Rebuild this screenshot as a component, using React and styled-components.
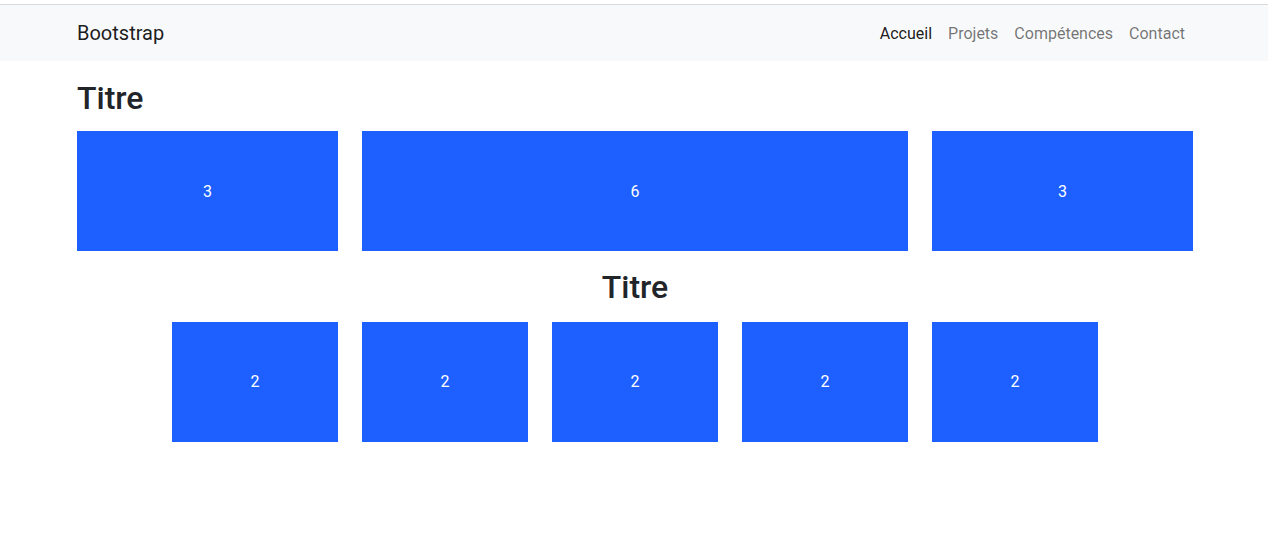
import styled, { createGlobalStyle } from 'styled-components';

const GlobalStyle = createGlobalStyle`
  body {
    margin: 0;
    font-family: Roboto, "Liberation Sans", "Noto Sans", sans-serif;
    color: #212529;
    background: #fff;
  }
`;

const Page = styled.div`
  padding-top: 4px;
`;

const Navbar = styled.nav`
  background-color: #f8f9fa;
  border-top: 1px solid #dadada;
  height: 56px;
  display: flex;
  align-items: center;
  padding-left: 2px;
`;

const Main = styled.main`
  padding-left: 2px;
`;

const Container = styled.div`
  width: 1140px;
  margin: 0 auto;
  padding: 0 12px;
  box-sizing: border-box;
`;

const NavInner = styled(Container)`
  display: flex;
  justify-content: space-between;
  align-items: center;
`;

const Brand = styled.a`
  font-size: 20px;
  color: rgba(0, 0, 0, 0.9);
  text-decoration: none;
`;

const NavList = styled.ul`
  display: flex;
  list-style: none;
  margin: 0;
  padding: 0;
`;

const NavLink = styled.a`
  display: block;
  padding: 8px;
  font-size: 16px;
  color: ${(p) => (p.$active ? 'rgba(0, 0, 0, 0.9)' : 'rgba(0, 0, 0, 0.55)')};
  text-decoration: none;
`;

const Title = styled.h2`
  font-size: 32px;
  font-weight: 500;
  line-height: 1.2;
  margin: ${(p) => p.$top} 0 8px;
  text-align: ${(p) => (p.$center ? 'center' : 'left')};
`;

const Row = styled.div`
  display: flex;
  gap: 24px;
  justify-content: ${(p) => (p.$center ? 'center' : 'flex-start')};
  margin-top: ${(p) => p.$top};
`;

const Col = styled.div`
  flex: 0 0 calc((100% - 264px) / 12 * ${(p) => p.$span} + ${(p) => (p.$span - 1) * 24}px);
  height: 120px;
  background-color: #1e5fff;
  color: #fff;
  font-size: 16px;
  display: flex;
  align-items: center;
  justify-content: center;
`;

const links = ['Accueil', 'Projets', 'Compétences', 'Contact'];

export default function App() {
  return (
    <Page>
      <GlobalStyle />
      <Navbar>
        <NavInner>
          <Brand href="#">Bootstrap</Brand>
          <NavList>
            {links.map((l, i) => (
              <li key={l}>
                <NavLink href="#" $active={i === 0}>{l}</NavLink>
              </li>
            ))}
          </NavList>
        </NavInner>
      </Navbar>
      <Main>
        <Container>
          <Title $top="18px">Titre</Title>
          <Row $top="14px">
            <Col $span={3}>3</Col>
            <Col $span={6}>6</Col>
            <Col $span={3}>3</Col>
          </Row>
          <Title $top="17px" $center>Titre</Title>
          <Row $top="15px" $center>
            {[0, 1, 2, 3, 4].map((i) => (
              <Col key={i} $span={2}>2</Col>
            ))}
          </Row>
        </Container>
      </Main>
    </Page>
  );
}
